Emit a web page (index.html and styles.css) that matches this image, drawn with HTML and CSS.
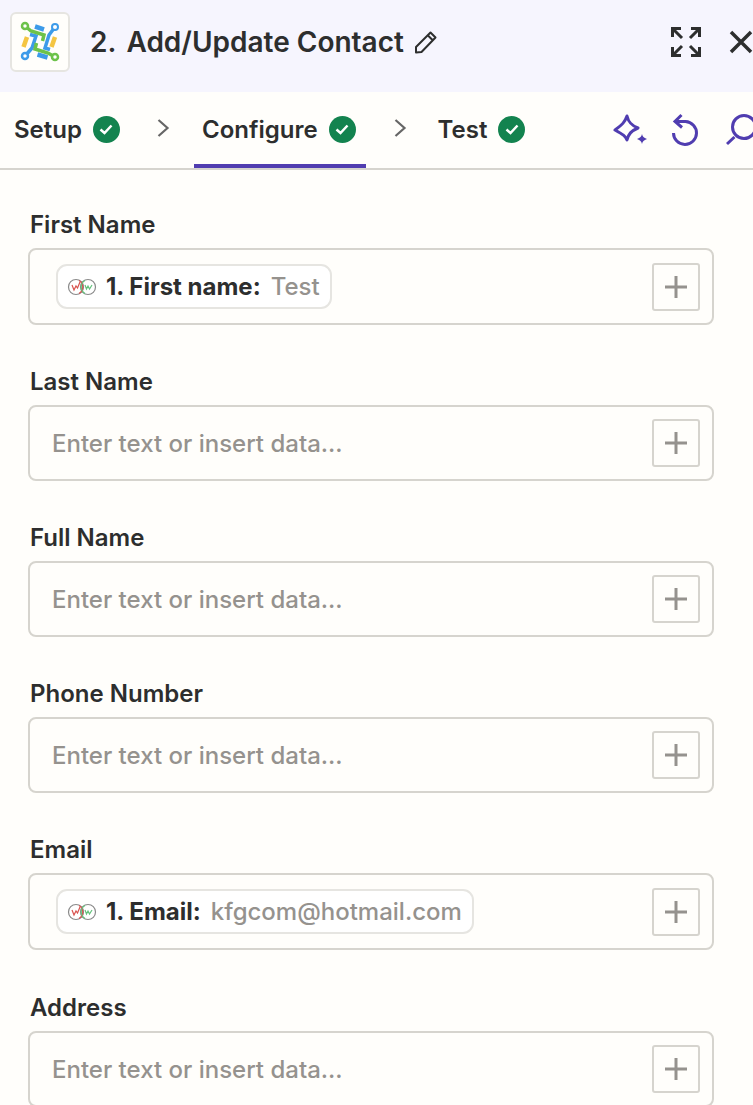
FILE: index.html
```html
<!DOCTYPE html>
<html lang="en">
<head>
    <meta charset="UTF-8">
    <meta name="viewport" content="width=device-width, initial-scale=1.0">
    <title>Add/Update Contact</title>
    <link rel="stylesheet" href="styles.css">
</head>
<body>
    <header class="header">
        <div class="app-logo">
            <svg width="44" height="44" viewBox="0 0 44 44" fill="none" stroke-linejoin="miter">
                <path d="M9 17L5.500 27" stroke="#f4c542" stroke-width="4.500"/>
                <path d="M37 17l-3.500 10" stroke="#f4c542" stroke-width="4.500"/>
                <path d="M17 6.500l9 3" stroke="#3d9be9" stroke-width="4.500"/>
                <path d="M19.500 34.500l10 3" stroke="#3d9be9" stroke-width="4.500"/>
                <path d="M37 7l-6 8-4 13 5 1.500" stroke="#3d9be9" stroke-width="3.500"/>
                <path d="M7 36l7-8 4-12-6-1.500" stroke="#3d9be9" stroke-width="3.500"/>
                <path d="M7 6l6 5 13 4-1.500 6" stroke="#6cc24a" stroke-width="3.500"/>
                <path d="M37 37l-7-4-13-4 1.500-6" stroke="#6cc24a" stroke-width="3.500"/>
                <circle cx="7" cy="6" r="3" fill="#fff" stroke="#6cc24a" stroke-width="2.500"/>
                <circle cx="37" cy="7" r="3" fill="#fff" stroke="#3d9be9" stroke-width="2"/>
                <circle cx="7" cy="36" r="3" fill="#fff" stroke="#3d9be9" stroke-width="2.500"/>
                <circle cx="37" cy="37" r="3" fill="#fff" stroke="#6cc24a" stroke-width="2.500"/>
            </svg>
        </div>
        <h1 class="step-title"><span class="step-num">2.</span> Add/Update Contact</h1>
        <svg class="edit-icon" width="24" height="24" viewBox="0 0 24 24" fill="none" stroke="#2d2e2e" stroke-width="2" stroke-linejoin="round">
            <path d="M2 22.500v-5.500L16.500 2.500l5 5L7.500 22z M14 5.500l4.500 4.500"/>
        </svg>
        <div class="window-actions">
            <svg width="30" height="30" viewBox="0 0 30 30" fill="none" stroke="#2d2e2e" stroke-width="3">
                <path d="M1.500 10V1.500H10 M2 2l9 9 M20 1.500h8.500V10 M28 2l-9 9 M1.500 20v8.500H10 M2 28l9-9 M28.500 20v8.500H20 M28 28l-9-9"/>
            </svg>
            <svg class="close-icon" width="24" height="24" viewBox="0 0 24 24" fill="none" stroke="#2d2e2e" stroke-width="3.500">
                <path d="M2 2l20 20 M22 2L2 22"/>
            </svg>
        </div>
    </header>

    <nav class="tabs">
        <div class="tab">Setup <span class="check"><svg width="16" height="16" viewBox="0 0 16 16" fill="none" stroke="#fff" stroke-width="2.500"><path d="M2.500 8.500l4 3.500 7-7.500"/></svg></span></div>
        <svg class="chevron chevron-one" width="14" height="20" viewBox="0 0 14 20" fill="none" stroke="#666" stroke-width="2.200"><path d="M2.500 2l9 8-9 8"/></svg>
        <div class="tab tab-active">Configure <span class="check"><svg width="16" height="16" viewBox="0 0 16 16" fill="none" stroke="#fff" stroke-width="2.500"><path d="M2.500 8.500l4 3.500 7-7.500"/></svg></span></div>
        <svg class="chevron chevron-two" width="14" height="20" viewBox="0 0 14 20" fill="none" stroke="#666" stroke-width="2.200"><path d="M2.500 2l9 8-9 8"/></svg>
        <div class="tab tab-test">Test <span class="check"><svg width="16" height="16" viewBox="0 0 16 16" fill="none" stroke="#fff" stroke-width="2.500"><path d="M2.500 8.500l4 3.500 7-7.500"/></svg></span></div>
        <div class="tool-icons">
            <svg width="36" height="34" viewBox="0 0 36 34" fill="none" stroke="#503db0" stroke-width="3" stroke-linejoin="round">
                <path d="M14 2c1.500 6 4 9.500 11 12-7 3-9.500 6-11 12-1.500-4-4-5.500-12-10 7-5 10-8 12-14z" transform="translate(0 1)"/>
                <path d="M29 21c.6 2.600 1.700 3.800 5 5-3.300 1.200-4.400 2.400-5 5-.6-2.600-1.700-3.800-5-5 3.300-1.200 4.400-2.400 5-5z" fill="#503db0" stroke="none"/>
            </svg>
            <svg width="30" height="34" viewBox="0 0 30 34" fill="none" stroke="#503db0" stroke-width="3">
                <path d="M7 8.500h9.500a11.500 11.500 0 1 1-12 11.500 M12.500 2L6 8.500l7 6"/>
            </svg>
            <svg class="search-icon" width="34" height="34" viewBox="0 0 34 34" fill="none" stroke="#503db0" stroke-width="3">
                <circle cx="19" cy="14" r="11.500"/>
                <path d="M9.500 24L2 31"/>
            </svg>
        </div>
    </nav>

    <main class="form">
        <div class="field">
            <label class="field-label">First Name</label>
            <div class="field-box field-box-chip">
                <span class="chip">
                    <svg class="chip-icon" width="30" height="18" viewBox="0 0 30 18" fill="none" stroke-width="1.200">
                        <circle cx="9" cy="9" r="7.500" stroke="#8a8a8a"/>
                        <circle cx="21" cy="9" r="7.500" stroke="#8a8a8a"/>
                        <path d="M12 2.500a7.500 7.500 0 0 1 0 13" stroke="#d9534f"/>
                        <path d="M18 2.500a7.500 7.500 0 0 0 0 13" stroke="#63c27c"/>
                        <path d="M5 7l2 5 2-4 1.500 2L13 4" stroke="#d9534f"/>
                        <path d="M18 7l1.500 4 1.500-3 1.500 3L25 7" stroke="#63c27c"/>
                    </svg>
                    <b class="chip-key">1. First name:</b>
                    <span class="chip-value">Test</span>
                </span>
                <button class="add-btn"><svg width="22" height="22" viewBox="0 0 22 22" stroke="#95928e" stroke-width="3"><path d="M0 11h22 M11 0v22"/></svg></button>
            </div>
        </div>
        <div class="field">
            <label class="field-label">Last Name</label>
            <div class="field-box">
                <span class="placeholder">Enter text or insert data...</span>
                <button class="add-btn"><svg width="22" height="22" viewBox="0 0 22 22" stroke="#95928e" stroke-width="3"><path d="M0 11h22 M11 0v22"/></svg></button>
            </div>
        </div>
        <div class="field">
            <label class="field-label">Full Name</label>
            <div class="field-box">
                <span class="placeholder">Enter text or insert data...</span>
                <button class="add-btn"><svg width="22" height="22" viewBox="0 0 22 22" stroke="#95928e" stroke-width="3"><path d="M0 11h22 M11 0v22"/></svg></button>
            </div>
        </div>
        <div class="field">
            <label class="field-label">Phone Number</label>
            <div class="field-box">
                <span class="placeholder">Enter text or insert data...</span>
                <button class="add-btn"><svg width="22" height="22" viewBox="0 0 22 22" stroke="#95928e" stroke-width="3"><path d="M0 11h22 M11 0v22"/></svg></button>
            </div>
        </div>
        <div class="field">
            <label class="field-label">Email</label>
            <div class="field-box field-box-chip">
                <span class="chip">
                    <svg class="chip-icon" width="30" height="18" viewBox="0 0 30 18" fill="none" stroke-width="1.200">
                        <circle cx="9" cy="9" r="7.500" stroke="#8a8a8a"/>
                        <circle cx="21" cy="9" r="7.500" stroke="#8a8a8a"/>
                        <path d="M12 2.500a7.500 7.500 0 0 1 0 13" stroke="#d9534f"/>
                        <path d="M18 2.500a7.500 7.500 0 0 0 0 13" stroke="#63c27c"/>
                        <path d="M5 7l2 5 2-4 1.500 2L13 4" stroke="#d9534f"/>
                        <path d="M18 7l1.500 4 1.500-3 1.500 3L25 7" stroke="#63c27c"/>
                    </svg>
                    <b class="chip-key">1. Email:</b>
                    <span class="chip-value">kfgcom@hotmail.com</span>
                </span>
                <button class="add-btn"><svg width="22" height="22" viewBox="0 0 22 22" stroke="#95928e" stroke-width="3"><path d="M0 11h22 M11 0v22"/></svg></button>
            </div>
        </div>
        <div class="field">
            <label class="field-label">Address</label>
            <div class="field-box">
                <span class="placeholder">Enter text or insert data...</span>
                <button class="add-btn"><svg width="22" height="22" viewBox="0 0 22 22" stroke="#95928e" stroke-width="3"><path d="M0 11h22 M11 0v22"/></svg></button>
            </div>
        </div>
    </main>
</body>
</html>
```

FILE: styles.css
```css
html, body {
    margin: 0;
    padding: 0;
    height: 1105px;
    overflow: hidden;
}

body {
    font-family: Inter, "Noto Sans", sans-serif;
    background-color: #fffefb;
    color: #2d2e2e;
}

.header {
    display: flex;
    align-items: center;
    height: 92px;
    padding: 0 0 8px 10px;
    background-color: #f6f5fe;
    box-sizing: border-box;
}

.app-logo {
    display: flex;
    align-items: center;
    justify-content: center;
    width: 60px;
    height: 60px;
    box-sizing: border-box;
    background: #fffefb;
    border: 2px solid #e6e5e1;
    border-radius: 6px;
}

.step-title {
    margin: 0 0 0 20px;
    font-size: 28px;
    font-weight: 600;
    white-space: nowrap;
}

.step-num {
    margin-right: 3px;
}

.edit-icon {
    margin-left: 10px;
}

.window-actions {
    display: flex;
    align-items: center;
    margin-left: auto;
    gap: 28px;
}

.tabs {
    display: flex;
    align-items: stretch;
    height: 78px;
    box-sizing: border-box;
    border-bottom: 2px solid #d6d4ce;
    padding-left: 14px;
    white-space: nowrap;
}

.tabs > * {
    flex: none;
}

.tab {
    display: flex;
    align-items: center;
    gap: 11px;
    height: 76px;
    padding-bottom: 2px;
    box-sizing: border-box;
    font-size: 24px;
    font-weight: 600;
}

.tab-active {
    padding: 2px 10px 0 8px;
    border-bottom: 4px solid #503db0;
    margin-left: 24px;
}

.tab-test {
    margin-left: 31px;
}

.check {
    display: flex;
    align-items: center;
    justify-content: center;
    width: 27px;
    height: 27px;
    border-radius: 50%;
    background-color: #13834f;
}

.chevron {
    align-self: center;
    margin-left: 36px;
    margin-bottom: 4px;
}

.chevron-two {
    margin-left: 27px;
}

.tool-icons {
    display: flex;
    align-items: center;
    gap: 20px;
    margin-left: 88px;
}

.tool-icons svg {
    flex: none;
}

.search-icon {
    margin-left: 6px;
}

.form {
    padding: 41px 39px 0 28px;
}

.field-label {
    display: block;
    padding-left: 2px;
    height: 37px;
    line-height: 28px;
    font-size: 24px;
    font-weight: 600;
    margin-top: 43px;
}

.field:first-child .field-label {
    margin-top: 0;
}

.field:last-child .field-label {
    margin-top: 44px;
}

.field-box {
    display: flex;
    align-items: center;
    justify-content: space-between;
    height: 76px;
    box-sizing: border-box;
    padding: 0 12px 0 22px;
    background-color: #fffefb;
    border: 2px solid #d6d4ce;
    border-radius: 8px;
}

.field-box-chip {
    height: 77px;
    padding-left: 26px;
}

.placeholder {
    font-size: 24px;
    font-weight: 500;
    color: #95928e;
}

.chip {
    display: flex;
    align-items: center;
    height: 45px;
    box-sizing: border-box;
    padding: 0 10px 0 9px;
    background-color: #fff;
    border: 2px solid #e6e5e1;
    border-radius: 11px;
    font-size: 24px;
    white-space: nowrap;
}

.chip-icon {
    margin-right: 9px;
}

.chip-key {
    font-weight: 700;
    margin-right: 10px;
}

.chip-value {
    font-weight: 500;
    color: #95928e;
}

.add-btn {
    display: flex;
    align-items: center;
    justify-content: center;
    width: 48px;
    height: 48px;
    padding: 0;
    background-color: #fffefb;
    border: 2px solid #d6d4ce;
    border-radius: 3px;
}
```
